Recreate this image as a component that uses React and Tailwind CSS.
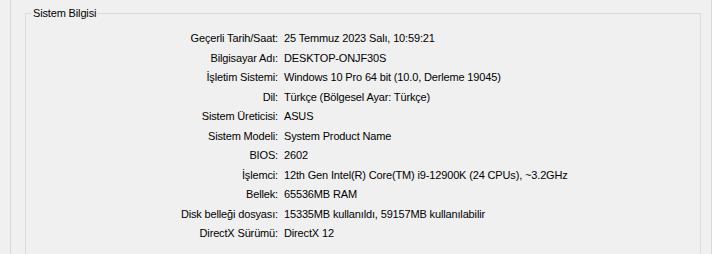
import React from "react";

const satirlar = [
    ["Geçerli Tarih/Saat:", "25 Temmuz 2023 Salı, 10:59:21"],
    ["Bilgisayar Adı:", "DESKTOP-ONJF30S"],
    ["İşletim Sistemi:", "Windows 10 Pro 64 bit (10.0, Derleme 19045)"],
    ["Dil:", "Türkçe (Bölgesel Ayar: Türkçe)"],
    ["Sistem Üreticisi:", "ASUS"],
    ["Sistem Modeli:", "System Product Name"],
    ["BIOS:", "2602"],
    ["İşlemci:", "12th Gen Intel(R) Core(TM) i9-12900K (24 CPUs), ~3.2GHz"],
    ["Bellek:", "65536MB RAM"],
    ["Disk belleği dosyası:", "15335MB kullanıldı, 59157MB kullanılabilir"],
    ["DirectX Sürümü:", "DirectX 12"],
];

const App = () => {
    return (
        <main className="h-[254px] w-[712px] overflow-hidden bg-[#f0f0f0] pl-[10px] font-['Liberation_Sans',Arial,sans-serif] text-[11px] tracking-[-0.15px] text-black">
            <div className="h-full w-[702px] border-x border-[#d9d9d9] pl-[14px] pr-[10px] pt-[6px]">
                <fieldset className="h-[260px] border border-b-0 border-[#dcdcdc]">
                    <legend className="ml-[5px] px-[2px] leading-[15px]">Sistem Bilgisi</legend>
                    <div className="mt-[8px] grid grid-cols-[252px_1fr] gap-x-[6px] auto-rows-[19.5px]">
                        {satirlar.map(([etiket, deger]) => (
                            <React.Fragment key={etiket}>
                                <span className="text-right leading-[19.5px]">{etiket}</span>
                                <span className="leading-[19.5px]">{deger}</span>
                            </React.Fragment>
                        ))}
                    </div>
                </fieldset>
            </div>
        </main>
    );
};

export default App;
